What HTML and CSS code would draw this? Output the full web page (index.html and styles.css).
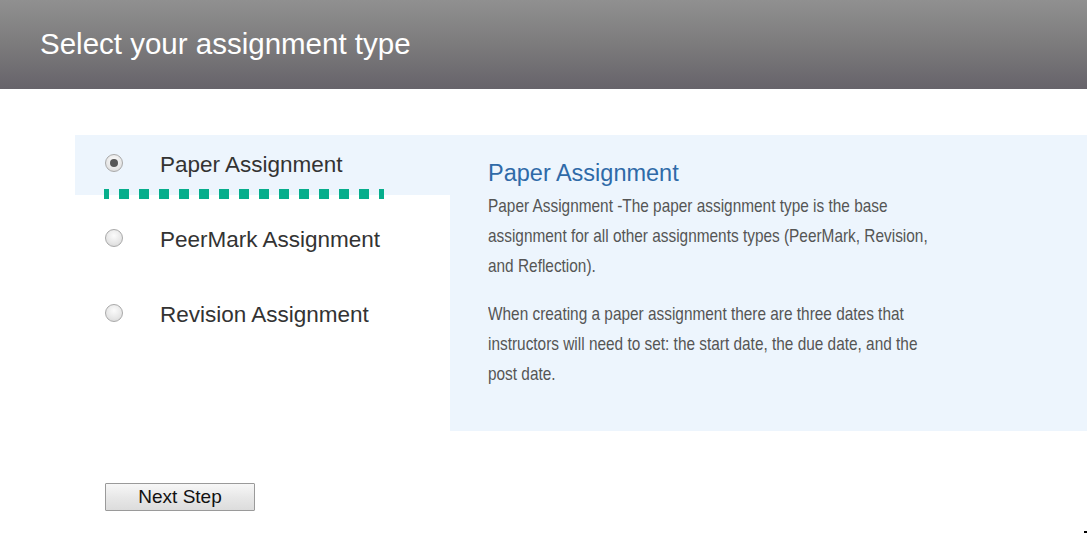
FILE: index.html
```html
<!DOCTYPE html>
<html lang="en">
<head>
<meta charset="utf-8">
<title>Select your assignment type</title>
<link rel="stylesheet" href="styles.css">
</head>
<body>
<header class="topbar">
  <h1 class="title">Select your assignment type</h1>
</header>
<main class="content">
  <div class="chooser">
    <ul class="types">
      <li class="type selected">
        <span class="radio checked"></span>
        <span class="label">Paper Assignment</span>
        <span class="focus-line"></span>
      </li>
      <li class="type">
        <span class="radio"></span>
        <span class="label">PeerMark Assignment</span>
      </li>
      <li class="type">
        <span class="radio"></span>
        <span class="label">Revision Assignment</span>
      </li>
    </ul>
    <section class="details">
      <h2 class="details-title">Paper Assignment</h2>
      <p class="details-text">Paper Assignment -The paper assignment type is the base assignment for all other assignments types (PeerMark, Revision, and Reflection).</p>
      <p class="details-text">When creating a paper assignment there are three dates that instructors will need to set: the start date, the due date, and the post date.</p>
    </section>
  </div>
  <div class="actions">
    <button class="next-btn" type="button">Next Step</button>
  </div>
</main>
<span class="corner-mark"></span>
</body>
</html>
```
FILE: styles.css
```css
html, body {
  margin: 0;
  padding: 0;
}
body {
  font-family: "Liberation Sans", Arial, sans-serif;
  background: #ffffff;
  width: 1087px;
  height: 543px;
  overflow: hidden;
  position: relative;
}
.topbar {
  height: 89px;
  background: linear-gradient(to bottom, #909090 0%, #7c7b7c 50%, #66636a 100%);
  box-sizing: border-box;
  padding: 27px 0 0 40px;
}
.title {
  margin: 0;
  font-weight: normal;
  font-size: 29.5px;
  line-height: 34px;
  color: #ffffff;
}
.content {
  padding: 46px 0 0 75px;
}
.chooser {
  display: flex;
  align-items: flex-start;
}
.types {
  list-style: none;
  margin: 0;
  padding: 0;
  width: 375px;
  flex: none;
}
.type {
  position: relative;
  height: 60px;
  margin-bottom: 15px;
  display: flex;
  align-items: flex-start;
  box-sizing: border-box;
  padding: 19px 0 0 30px;
}
.type.selected {
  background: #edf5fd;
}
.radio {
  width: 18px;
  height: 18px;
  border-radius: 50%;
  box-sizing: border-box;
  border: 1px solid #a9a9a9;
  background: radial-gradient(circle at 50% 35%, #fbfbfb 0%, #e6e6e6 60%, #d2d2d2 100%);
  flex: none;
  position: relative;
}
.radio.checked::after {
  content: "";
  position: absolute;
  left: 4px;
  top: 4px;
  width: 8px;
  height: 8px;
  border-radius: 50%;
  background: #555555;
}
.label {
  margin-left: 37px;
  margin-top: -2px;
  font-size: 22.5px;
  line-height: 26px;
  color: #333333;
}
.focus-line {
  position: absolute;
  left: 29px;
  top: 54px;
  width: 280px;
  height: 10px;
  background: repeating-linear-gradient(90deg, #07ae8c 0 5px, transparent 5px 15px, #07ae8c 15px 20px);
}
.details {
  flex: 1;
  min-width: 0;
  background: #edf5fd;
  min-height: 296px;
  box-sizing: border-box;
  padding: 23px 40px 42px 38px;
}
.details-title {
  margin: 0 0 3px 0;
  font-weight: normal;
  font-size: 23.5px;
  line-height: 30px;
  color: #2f6aa8;
}
.details-text {
  margin: 0 0 18px 0;
  width: 562px;
  transform: scaleX(0.81);
  transform-origin: 0 0;
  font-family: "Liberation Sans", Arial, sans-serif;
  font-size: 19px;
  line-height: 30px;
  color: #555555;
}
.details-text:last-child {
  margin-bottom: 0;
}
.actions {
  padding: 52px 0 0 30px;
}
.next-btn {
  width: 150px;
  height: 28px;
  margin: 0;
  padding: 0;
  border: 1px solid #9a9a9a;
  border-radius: 1px;
  background: linear-gradient(to bottom, #f7f7f7 0%, #e8e8e8 50%, #dcdcdc 100%);
  font-family: "Liberation Sans", Arial, sans-serif;
  font-size: 19px;
  color: #111111;
  line-height: 26px;
}
.corner-mark {
  position: absolute;
  right: 0;
  top: 531px;
  width: 3px;
  height: 2px;
  background: #000000;
}
```
